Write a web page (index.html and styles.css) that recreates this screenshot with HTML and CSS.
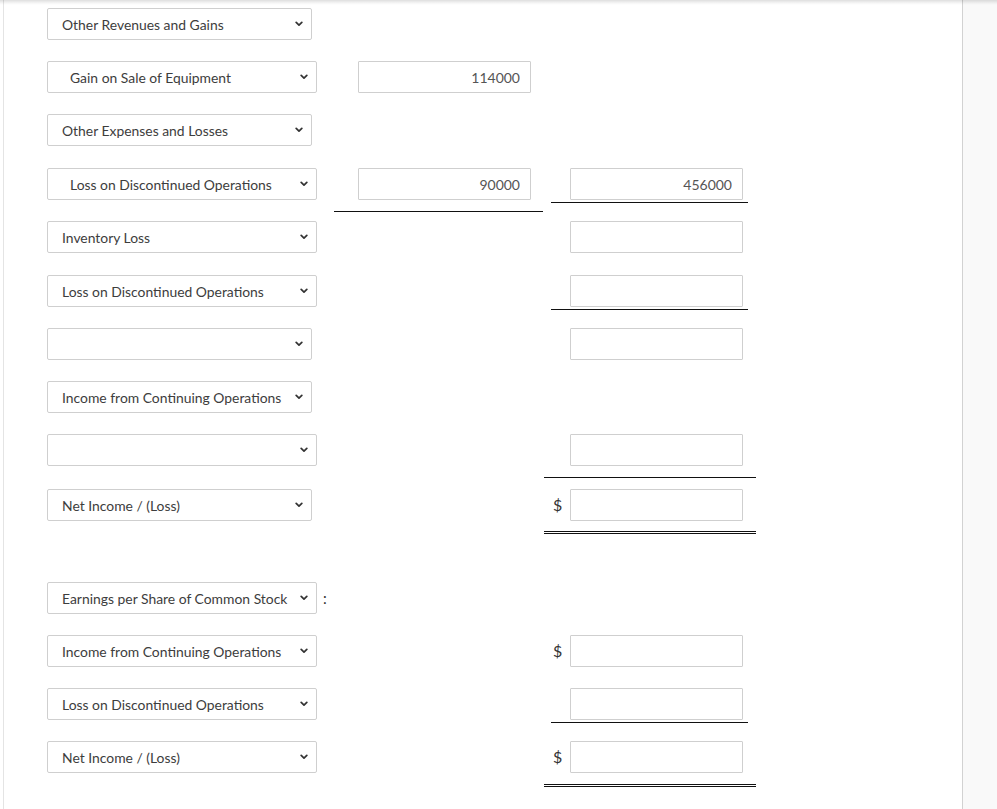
FILE: index.html
```html
<!DOCTYPE html>
<html>
<head>
<meta charset="utf-8">
<link rel="stylesheet" href="styles.css">
</head>
<body>
<div class="page">
  <div class="shade"></div>
  <main class="sheet">
    <div class="row">
      <div class="c1"><div class="sel"><select><option>Other Revenues and Gains</option></select><svg class="chev" viewBox="0 0 8 6"><path d="M1.2 1.4 L4 4.2 L6.8 1.4"/></svg></div></div>
    </div>
    <div class="row">
      <div class="c1"><div class="sel w"><select class="ind"><option>Gain on Sale of Equipment</option></select><svg class="chev" viewBox="0 0 8 6"><path d="M1.2 1.4 L4 4.2 L6.8 1.4"/></svg></div></div>
      <div class="c2"><input class="amt" value="114000"></div>
    </div>
    <div class="row h54">
      <div class="c1"><div class="sel"><select><option>Other Expenses and Losses</option></select><svg class="chev" viewBox="0 0 8 6"><path d="M1.2 1.4 L4 4.2 L6.8 1.4"/></svg></div></div>
    </div>
    <div class="row">
      <div class="c1"><div class="sel w"><select class="ind"><option>Loss on Discontinued Operations</option></select><svg class="chev" viewBox="0 0 8 6"><path d="M1.2 1.4 L4 4.2 L6.8 1.4"/></svg></div></div>
      <div class="c2 ul"><input class="amt" value="90000"></div>
      <div class="c3"><div class="line single"><span class="slot"></span><input class="amt" value="456000"></div></div>
    </div>
    <div class="row h54">
      <div class="c1"><div class="sel w"><select><option>Inventory Loss</option></select><svg class="chev" viewBox="0 0 8 6"><path d="M1.2 1.4 L4 4.2 L6.8 1.4"/></svg></div></div>
      <div class="c2"></div>
      <div class="c3"><div class="line"><span class="slot"></span><input class="amt" value=""></div></div>
    </div>
    <div class="row">
      <div class="c1"><div class="sel w"><select><option>Loss on Discontinued Operations</option></select><svg class="chev" viewBox="0 0 8 6"><path d="M1.2 1.4 L4 4.2 L6.8 1.4"/></svg></div></div>
      <div class="c2"></div>
      <div class="c3"><div class="line single"><span class="slot"></span><input class="amt" value=""></div></div>
    </div>
    <div class="row">
      <div class="c1"><div class="sel"><select><option></option></select><svg class="chev" viewBox="0 0 8 6"><path d="M1.2 1.4 L4 4.2 L6.8 1.4"/></svg></div></div>
      <div class="c2"></div>
      <div class="c3"><div class="line"><span class="slot"></span><input class="amt" value=""></div></div>
    </div>
    <div class="row">
      <div class="c1"><div class="sel"><select><option>Income from Continuing Operations</option></select><svg class="chev" viewBox="0 0 8 6"><path d="M1.2 1.4 L4 4.2 L6.8 1.4"/></svg></div></div>
    </div>
    <div class="row h55">
      <div class="c1"><div class="sel w"><select><option></option></select><svg class="chev" viewBox="0 0 8 6"><path d="M1.2 1.4 L4 4.2 L6.8 1.4"/></svg></div></div>
      <div class="c2"></div>
      <div class="c3"><div class="line sub"><span class="slot"></span><input class="amt" value=""></div></div>
    </div>
    <div class="row h93">
      <div class="c1"><div class="sel"><select><option>Net Income / (Loss)</option></select><svg class="chev" viewBox="0 0 8 6"><path d="M1.2 1.4 L4 4.2 L6.8 1.4"/></svg></div></div>
      <div class="c2"></div>
      <div class="c3"><div class="line total"><span class="slot">$</span><input class="amt" value=""></div></div>
    </div>
    <div class="row">
      <div class="c1"><div class="sel w"><select><option>Earnings per Share of Common Stock</option></select><svg class="chev" viewBox="0 0 8 6"><path d="M1.2 1.4 L4 4.2 L6.8 1.4"/></svg></div><span class="colon">:</span></div>
    </div>
    <div class="row">
      <div class="c1"><div class="sel w"><select><option>Income from Continuing Operations</option></select><svg class="chev" viewBox="0 0 8 6"><path d="M1.2 1.4 L4 4.2 L6.8 1.4"/></svg></div></div>
      <div class="c2"></div>
      <div class="c3"><div class="line"><span class="slot">$</span><input class="amt" value=""></div></div>
    </div>
    <div class="row">
      <div class="c1"><div class="sel w"><select><option>Loss on Discontinued Operations</option></select><svg class="chev" viewBox="0 0 8 6"><path d="M1.2 1.4 L4 4.2 L6.8 1.4"/></svg></div></div>
      <div class="c2"></div>
      <div class="c3"><div class="line single"><span class="slot"></span><input class="amt" value=""></div></div>
    </div>
    <div class="row">
      <div class="c1"><div class="sel w"><select><option>Net Income / (Loss)</option></select><svg class="chev" viewBox="0 0 8 6"><path d="M1.2 1.4 L4 4.2 L6.8 1.4"/></svg></div></div>
      <div class="c2"></div>
      <div class="c3"><div class="line total last"><span class="slot">$</span><input class="amt" value=""></div></div>
    </div>
  </main>
  <aside class="rail"></aside>
</div>
</body>
</html>
```

FILE: styles.css
```css
* { box-sizing: border-box; }
html, body { margin: 0; padding: 0; background: #fff; }
body { font-family: Lato, "Open Sans", sans-serif; color: #333; overflow: hidden; }

.page { position: relative; display: flex; min-height: 809px; }
.shade {
  position: absolute; left: 0; right: 0; top: 0; height: 5px;
  background: linear-gradient(to bottom, rgba(0,0,0,0.13), rgba(0,0,0,0.04) 60%, rgba(0,0,0,0));
  pointer-events: none;
}
.sheet {
  margin-left: 3px;
  width: 960px;
  flex: none;
  border-left: 1px solid #e4e4e4;
  border-right: 1px solid #d2d2d2;
  background: #fff;
  padding: 8px 0 0 43px;
  min-height: 809px;
}
.rail { flex: 1; background: #f9f9f9; }

.row { display: flex; align-items: flex-start; height: 53px; }
.row.h54 { height: 54px; }
.row.h55 { height: 55px; }
.row.h93 { height: 93px; }

.c1 { width: 287px; flex: none; display: flex; align-items: center; }
.c2 { width: 209px; flex: none; padding-left: 24px; }
.c2.ul { border-bottom: 1px solid #111; padding-bottom: 11px; }
.c3 { width: 212px; flex: none; margin-left: 1px; }

.sel { position: relative; width: 265px; height: 32px; flex: none; }
.sel.w { width: 270px; }
.sel select {
  -webkit-appearance: none; appearance: none;
  width: 100%; height: 100%;
  border: 1px solid #cfcfcf; border-radius: 2px;
  background: #fff;
  font-family: Lato, "Open Sans", sans-serif; font-size: 13.9px; color: #3d3d3d;
  padding: 0 24px 0 14px;
  margin: 0;
  outline: none;
}
.sel select.ind { padding-left: 22px; }
.chev {
  position: absolute; right: 9px; top: 13px; width: 8px; height: 6px;
  fill: none; stroke: #333; stroke-width: 1.7; stroke-linecap: round; stroke-linejoin: round;
  pointer-events: none;
}
.colon { margin-left: 6px; font-size: 15px; line-height: 32px; color: #333; }

.amt {
  width: 173px; height: 32px; margin: 0; display: block;
  border: 1px solid #cfcfcf; border-radius: 1px;
  background: #fff;
  font-family: Lato, "Open Sans", sans-serif; font-size: 14px; color: #555;
  text-align: right; padding: 0 10px 0 6px;
  outline: none;
}

.line { display: flex; align-items: center; }
.slot { width: 26px; flex: none; padding-left: 9px; font-size: 16px; line-height: 32px; color: #333; }
.line.single { margin: 0 8px 0 7px; padding-bottom: 2px; border-bottom: 1px solid #111; }
.line.single .slot { width: 19px; }
.line.sub { padding-bottom: 11px; border-bottom: 1px solid #111; }
.line.total { padding-bottom: 10px; border-bottom: 3px double #111; }
.line.total.last { padding-bottom: 11px; }
```
